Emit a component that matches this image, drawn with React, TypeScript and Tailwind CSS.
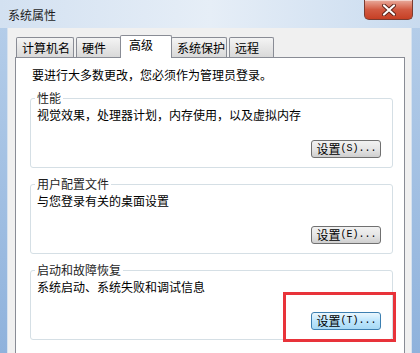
import React from 'react';

const tabs = [
  { label: '计算机名', w: 'w-[58px]', ml: 'ml-0' },
  { label: '硬件', w: 'w-[45px]', ml: 'ml-[2px]' },
  { label: '高级', w: 'w-[52px]', ml: '-ml-[1px]', active: true },
  { label: '系统保护', w: 'w-[56px]', ml: '-ml-[1px]' },
  { label: '远程', w: 'w-[45px]', ml: 'ml-[2px]' },
];

const groups = [
  { title: '性能', desc: '视觉效果，处理器计划，内存使用，以及虚拟内存', key: 'S' },
  { title: '用户配置文件', desc: '与您登录有关的桌面设置', key: 'E' },
  { title: '启动和故障恢复', desc: '系统启动、系统失败和调试信息', key: 'T', focused: true },
];

const App: React.FC = () => {
  return (
    <div className="relative w-[420px] h-[353px] overflow-hidden flex flex-col bg-gradient-to-b from-[#b7cfea] to-[#8fb2dc] font-['Noto_Sans_CJK_SC','Noto_Sans',sans-serif] text-[12px] leading-[16px] text-black">
      {/* title bar */}
      <div className="h-[28px] shrink-0 flex justify-between bg-gradient-to-r from-[#d3e1f1] via-[#e6eef7] to-[#c9dbef]">
        <div className="pl-[8px] pt-[7px] text-[12px] text-[#1e1e1e]">系统属性</div>
        <div className="mr-[7px] w-[49px] h-[20px] flex items-center justify-center rounded-b-[5px] border border-t-0 border-[#7a3b30] bg-gradient-to-b from-[#e8ab9d] via-[#d25a42] to-[#c63f24] shadow-[inset_0_1px_0_rgba(255,255,255,0.5)]">
          <svg width="14" height="12" viewBox="0 0 14 12">
            <path d="M2 1.5 L12 10.5 M12 1.5 L2 10.5" stroke="#5a2219" strokeWidth="4" strokeLinecap="round" />
            <path d="M2 1.5 L12 10.5 M12 1.5 L2 10.5" stroke="#ffffff" strokeWidth="2.2" strokeLinecap="round" />
          </svg>
        </div>
      </div>

      {/* dialog body */}
      <div className="flex-1 ml-[7px] mr-[8px] bg-[#f0f0f0] border-l border-r border-[#d6e2ef] flex flex-col">
        <div className="h-[29px] flex items-end pl-[8px] pt-[7px]">
          {tabs.map((t) =>
            t.active ? (
              <div
                key={t.label}
                className={`${t.w} ${t.ml} relative z-10 -mb-[1px] h-[23px] bg-white border border-b-0 border-[#898c95] rounded-t-[2px] pl-[8px] pt-[1px]`}
              >
                {t.label}
              </div>
            ) : (
              <div
                key={t.label}
                className={`${t.w} ${t.ml} h-[20px] bg-gradient-to-b from-[#f4f4f4] to-[#d9d9d9] border border-b-0 border-[#898c95] rounded-t-[2px] pl-[5px] pt-[2px]`}
              >
                {t.label}
              </div>
            )
          )}
        </div>

        <div className="flex-1 ml-[7px] w-[390px] bg-white border border-b-0 border-[#898c95] pl-[16px] pt-[9px]">
          <div>要进行大多数更改，您必须作为管理员登录。</div>
          <div className="mt-[7px] flex flex-col gap-[8px] w-[363px] -ml-[2px]">
            {groups.map((g) => (
              <fieldset key={g.title} className="border border-[#d5dfe5] rounded-[3px] pl-[4px] pr-[11px] pb-[9px]">
                <legend className="px-[2px] text-[#1e1e1e]">{g.title}</legend>
                <div className="mt-[1px] pl-[2px]">{g.desc}</div>
                <div className="mt-[17px] flex justify-end">
                  <div
                    className={
                      g.focused
                        ? 'w-[70px] h-[18px] rounded-[3px] border border-[#3c7fb1] bg-gradient-to-b from-[#eaf6fd] via-[#bee6fd] to-[#a7d9f5] flex items-center justify-center pl-[1px]'
                        : 'w-[70px] h-[18px] rounded-[3px] border border-[#707070] bg-gradient-to-b from-[#f2f2f2] via-[#e6e6e6] to-[#cfcfcf] flex items-center justify-center pl-[1px]'
                    }
                  >
                    <span>设置</span>
                    <span className="font-['Liberation_Mono',monospace] text-[10px] leading-[16px]">({g.key})...</span>
                  </div>
                </div>
              </fieldset>
            ))}
          </div>
        </div>
      </div>

      {/* red highlight */}
      <div className="absolute left-[283px] top-[292px] w-[113px] h-[50px] border-[3px] border-[#e8333a]" />
    </div>
  );
};

export default App;
